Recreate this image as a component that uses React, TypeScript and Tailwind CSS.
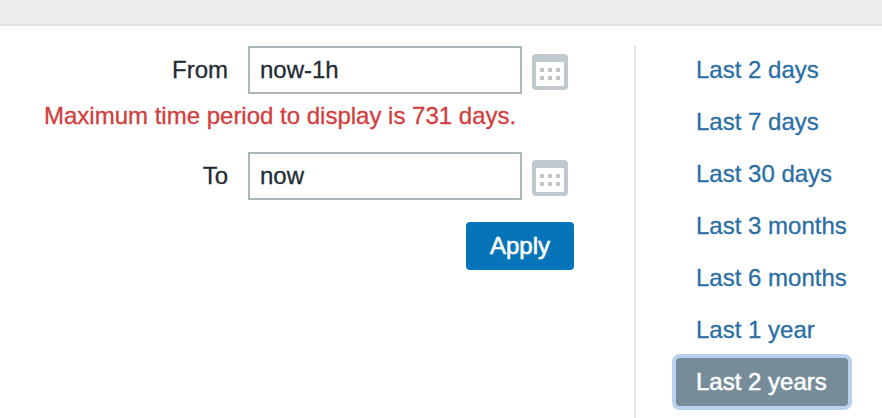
import { useState } from 'react';

const periods = ['Last 2 days', 'Last 7 days', 'Last 30 days', 'Last 3 months', 'Last 6 months', 'Last 1 year', 'Last 2 years'];

const CalendarIcon = () => (
    <svg width="36" height="36" viewBox="0 0 36 36">
        <rect width="36" height="36" rx="4" fill="#c0c9ce" />
        <rect x="4" y="8" width="28" height="24" fill="#fff" />
        {[14, 22].map((y) => [8, 16, 24].map((x) => <rect key={`${x}-${y}`} x={x} y={y} width="4" height="4" fill="#c0c5c8" />))}
    </svg>
);

interface FieldProps {
    label: string;
    value: string;
    onChange: (value: string) => void;
}

const DateField = ({ label, value, onChange }: FieldProps) => (
    <div className="flex h-12 items-center">
        <label className="w-[228px] text-right">{label}</label>
        <input
            className="ml-5 h-12 w-[274px] border-2 border-[#acb6bb] bg-white px-2.5 outline-none [-webkit-text-stroke:0.3px]"
            value={value}
            onChange={(e) => onChange(e.target.value)}
        />
        <button className="mt-1 ml-2.5">
            <CalendarIcon />
        </button>
    </div>
);

const App = () => {
    const [from, setFrom] = useState('now-1h');
    const [to, setTo] = useState('now');
    const [selected, setSelected] = useState('Last 2 years');

    return (
        <div className="h-[418px] overflow-hidden bg-white font-['Liberation_Sans',Arial,sans-serif] text-[24px] leading-7 text-[#1f2c33] [-webkit-text-stroke:0.3px]">
            <div className="h-[26px] border-b-2 border-[#dfe1e3] bg-[#ebedef]" />
            <div className="flex h-[392px] pt-5">
                <div className="w-[634px]">
                    <DateField label="From" value={from} onChange={setFrom} />
                    <p className="mt-2 mb-[22px] pl-11 text-[#d23d3d]">Maximum time period to display is 731 days.</p>
                    <DateField label="To" value={to} onChange={setTo} />
                    <div className="mt-[22px] flex w-[574px] justify-end">
                        <button className="h-12 w-[108px] rounded-[4px] bg-[#0674b8] text-white [-webkit-text-stroke:0.6px]">Apply</button>
                    </div>
                </div>
                <div className="flex-1 border-l-2 border-[#dfe1e3] pl-10">
                    {periods.map((period) => (
                        <div key={period} className="mb-1 h-12">
                            <button
                                onClick={() => setSelected(period)}
                                className={`h-12 rounded-[4px] px-5 text-left whitespace-nowrap ${
                                    selected === period
                                        ? 'w-[172px] bg-[#768d99] text-white ring-4 ring-[#b9d0ee] [-webkit-text-stroke:0.5px]'
                                        : 'text-[#2a6ea6] [-webkit-text-stroke:0.3px]'
                                }`}
                            >
                                {period}
                            </button>
                        </div>
                    ))}
                </div>
            </div>
        </div>
    );
};

export default App;
